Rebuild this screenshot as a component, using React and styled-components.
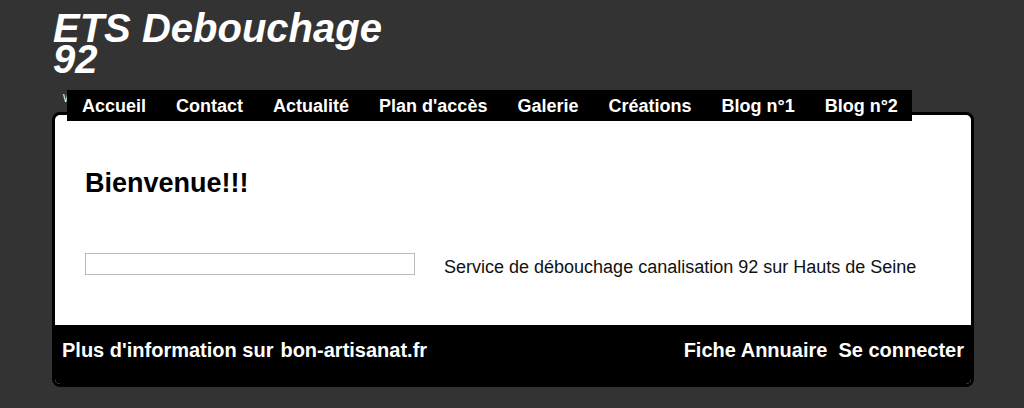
import styled, { createGlobalStyle } from "styled-components";

const GlobalStyle = createGlobalStyle`
  html, body {
    margin: 0;
    padding: 0;
    background: #333333;
    font-family: "Liberation Sans", Arial, sans-serif;
  }
`;

const menu = ["Accueil", "Contact", "Actualité", "Plan d'accès", "Galerie", "Créations", "Blog n°1", "Blog n°2"];

function App() {
    return (
        <>
            <GlobalStyle />
            <Page>
                <Header>
                    <Title>ETS Debouchage 92</Title>
                </Header>
                <NavWrap>
                    <Hidden>W</Hidden>
                    <Nav>
                        {menu.map((item) => (
                            <NavItem key={item}>{item}</NavItem>
                        ))}
                    </Nav>
                </NavWrap>
                <Panel>
                    <Content>
                        <Heading>Bienvenue!!!</Heading>
                        <Row>
                            <Box />
                            <Text>Service de débouchage canalisation 92 sur Hauts de Seine</Text>
                        </Row>
                    </Content>
                    <Footer>
                        <FootGroup>
                            <FootLink>Plus d'information sur</FootLink>
                            <FootLink>bon-artisanat.fr</FootLink>
                        </FootGroup>
                        <FootGroup $gap={11}>
                            <FootLink>Fiche Annuaire</FootLink>
                            <FootLink>Se connecter</FootLink>
                        </FootGroup>
                    </Footer>
                </Panel>
            </Page>
        </>
    );
}

export default App;

const Page = styled.div`
  width: 922px;
  margin-left: 52px;
  height: 408px;
`;

const Header = styled.header`
  padding-top: 13px;
  height: 90px;
  box-sizing: border-box;
`;

const Title = styled.h1`
  margin: 0 0 0 1px;
  width: 340px;
  color: #fff;
  font-size: 40px;
  line-height: 31px;
  font-weight: bold;
  font-style: italic;
`;

const NavWrap = styled.div`
  position: relative;
  height: 31px;
  margin-bottom: -9px;
  z-index: 1;
`;

const Hidden = styled.span`
  position: absolute;
  left: 11px;
  top: 3px;
  color: #fff;
  font-size: 10px;
`;

const Nav = styled.nav`
  position: relative;
  z-index: 1;
  display: flex;
  margin-left: 15px;
  width: 845px;
  height: 31px;
  box-sizing: border-box;
  padding-top: 2px;
  background: #000;
`;

const NavItem = styled.a`
  color: #fff;
  font-size: 18px;
  font-weight: bold;
  line-height: 29px;
  padding: 0 15px;
  white-space: nowrap;
`;

const Panel = styled.div`
  border: 3px solid #000;
  border-radius: 8px;
  background: #fff;
  overflow: hidden;
`;

const Content = styled.div`
  height: 210px;
  padding: 52px 30px 0;
  box-sizing: border-box;
`;

const Heading = styled.h2`
  margin: 0;
  font-size: 27px;
  line-height: 32px;
  font-weight: bold;
  color: #000;
`;

const Row = styled.div`
  display: flex;
  align-items: flex-start;
  gap: 29px;
  margin-top: 54px;
`;

const Box = styled.div`
  width: 328px;
  height: 20px;
  border: 1px solid #bbb;
`;

const Text = styled.p`
  margin: 3px 0 0;
  font-size: 18px;
  line-height: 22px;
  color: #111;
`;

const Footer = styled.footer`
  display: flex;
  justify-content: space-between;
  align-items: flex-start;
  height: 59px;
  background: #000;
  padding: 12px 7px 0;
  box-sizing: border-box;
`;

const FootGroup = styled.div`
  display: flex;
  gap: ${(p) => p.$gap || 7}px;
`;

const FootLink = styled.a`
  color: #fff;
  font-size: 20px;
  font-weight: bold;
  line-height: 26px;
`;
